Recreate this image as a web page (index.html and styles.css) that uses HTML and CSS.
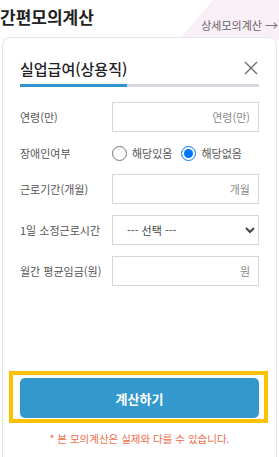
FILE: index.html
```html
<!DOCTYPE html>
<html lang="ko">

<head>
    <meta charset="utf-8">
    <link rel="stylesheet" href="styles.css">
    <title>간편모의계산</title>
</head>

<body>
    <header class="top-bar">
        <h1 class="top-title">간편모의계산</h1>
        <a class="top-link" href="#">상세모의계산 <span class="top-arrow">→</span></a>
    </header>

    <section class="calc-card">
        <div class="calc-head">
            <h2 class="calc-title">실업급여(상용직)</h2>
            <button class="calc-close" type="button" aria-label="닫기">
                <svg width="14" height="14" viewBox="0 0 14 14">
                    <path d="M1 1 L13 13 M13 1 L1 13" stroke="#6b6b6b" stroke-width="1.4" fill="none" />
                </svg>
            </button>
        </div>
        <div class="calc-progress"><span class="calc-progress-bar"></span></div>

        <form class="calc-form">
            <div class="form-row">
                <label class="form-label" for="ageId">연령(만)</label>
                <input class="form-input" type="text" id="ageId" placeholder="연령(만)">
            </div>
            <div class="form-row form-row-radio">
                <span class="form-label">장애인여부</span>
                <div class="radio-group">
                    <label class="radio-item"><input type="radio" name="disabled"> 해당있음</label>
                    <label class="radio-item"><input type="radio" name="disabled" checked> 해당없음</label>
                </div>
            </div>
            <div class="form-row">
                <label class="form-label" for="monthId">근로기간(개월)</label>
                <input class="form-input" type="text" id="monthId" placeholder="개월">
            </div>
            <div class="form-row">
                <label class="form-label" for="hourId">1일 소정근로시간</label>
                <select class="form-input form-select" id="hourId">
                    <option>--- 선택 ---</option>
                    <option>4시간</option>
                    <option>8시간</option>
                </select>
            </div>
            <div class="form-row">
                <label class="form-label" for="wageId">월간 평균임금(원)</label>
                <input class="form-input" type="text" id="wageId" placeholder="원">
            </div>
        </form>

        <div class="calc-action">
            <div class="calc-focus">
                <button class="calc-button" type="button">계산하기</button>
            </div>
            <p class="calc-note">* 본 모의계산은 실제와 다를 수 있습니다.</p>
        </div>
    </section>
</body>

</html>
```

FILE: styles.css
```css
*,
*:before,
*:after {
    box-sizing: border-box;
}

body {
    margin: 0;
    width: 279px;
    height: 457px;
    overflow: hidden;
    background: #fff;
    font-family: "Noto Sans CJK KR", "Noto Sans", sans-serif;
    color: #333;
}

.top-bar {
    position: relative;
    display: flex;
    align-items: flex-start;
    justify-content: space-between;
    height: 37px;
    padding: 5px 1px 0 0;
}

/* pink corner decoration */
.top-bar:before {
    content: "";
    position: absolute;
    top: 0;
    right: 0;
    width: 100px;
    height: 40px;
    background: #f9eff6;
    clip-path: polygon(34px 0, 100% 0, 100% 100%, 0 100%);
    z-index: -1;
}

.top-title {
    margin: 0;
    font-size: 17px;
    font-weight: 700;
    color: #222;
    line-height: 24px;
}

.top-link {
    margin-top: 12px;
    font-size: 11px;
    color: #666;
    text-decoration: none;
    line-height: 16px;
}

.top-arrow {
    font-size: 13px;
    color: #777;
}

.calc-card {
    margin: 0 2px;
    height: 430px;
    border: 1px solid #e3e6ec;
    border-bottom: none;
    border-radius: 8px 8px 0 0;
    background: #fff;
    padding: 17px 17px 0;
}

.calc-head {
    display: flex;
    align-items: center;
    justify-content: space-between;
    height: 26px;
}

.calc-title {
    margin: 0;
    font-size: 15px;
    font-weight: 500;
    color: #222;
}

.calc-close {
    border: none;
    background: none;
    padding: 0;
    margin-right: 1px;
    width: 14px;
    height: 14px;
    display: flex;
}

.calc-progress {
    margin-top: 3px;
    height: 3px;
    background: #d6dae0;
}

.calc-progress-bar {
    display: block;
    width: 107px;
    height: 3px;
    background: #2f95cc;
}

.calc-form {
    margin-top: 15px;
}

.form-row {
    display: flex;
    align-items: center;
    height: 30px;
    margin-bottom: 11px;
}

.form-row-radio {
    height: 22px;
    margin-top: -1px;
    margin-bottom: 10px;
}

.form-label {
    flex: none;
    width: 92px;
    font-size: 11px;
    color: #555;
}

.form-input {
    flex: 1;
    min-width: 0;
    height: 30px;
    border: 1px solid #d4d7dc;
    border-radius: 0;
    padding: 0 8px;
    font-family: inherit;
    font-size: 11px;
    color: #333;
    text-align: right;
    background: #fff;
}

.form-input::placeholder {
    color: #8a8a8a;
}

.form-select {
    text-align: left;
    padding: 0 6px 0 10px;
    color: #444;
}

.radio-group {
    display: flex;
    gap: 9px;
}

.radio-item {
    display: flex;
    align-items: center;
    gap: 5px;
    font-size: 11px;
    color: #555;
}

.radio-item input {
    margin: 0;
    width: 15px;
    height: 15px;
}

.calc-action {
    margin-top: 85px;
}

.calc-focus {
    margin: 0 -9px 0 -11px;
    border: 4px solid #fcc100;
    padding: 3px 5px 1px 7px;
}

.calc-button {
    display: block;
    width: 100%;
    height: 40px;
    border: none;
    border-radius: 5px;
    background: #3399cc;
    color: #fff;
    font-family: inherit;
    font-size: 13px;
    font-weight: 700;
}

.calc-note {
    margin: 8px 0 0;
    text-align: center;
    font-size: 10.5px;
    color: #ef6c4a;
}
```
